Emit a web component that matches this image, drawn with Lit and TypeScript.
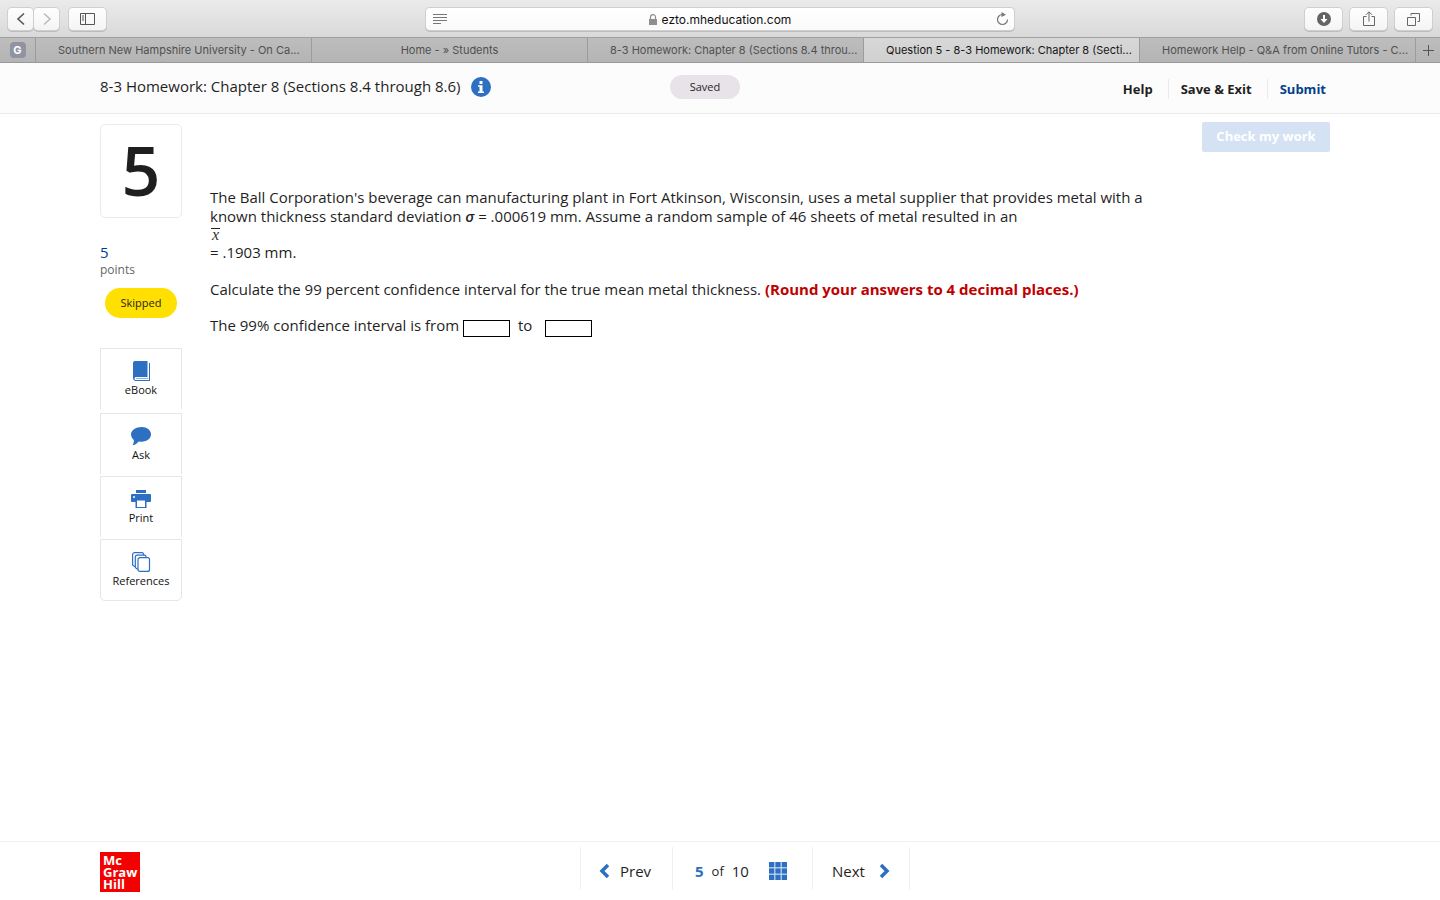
import { LitElement, html, css, svg } from "lit";
import { customElement, state } from "lit/decorators.js";
import { classMap } from "lit/directives/class-map.js";

@customElement("browser-chrome")
export class BrowserChrome extends LitElement {
  static styles = css`
    :host { display: block; font-family: Inter, "Liberation Sans", sans-serif; }
    .toolbar {
      display: grid;
      grid-template-columns: 1fr 41% 1fr;
      align-items: center;
      height: 37px;
      padding-top: 1px;
      box-sizing: border-box;
      background: linear-gradient(#ebebeb, #d9d9d9);
    }
    .group { display: flex; gap: 10px; padding-left: 8px; }
    .pair { display: flex; gap: 1px; }
    .group.end { justify-content: flex-end; gap: 8px; padding: 0 8px 0 0; }
    button { font: inherit; border: 0; padding: 0; margin: 0; }
    .key {
      display: flex;
      align-items: center;
      justify-content: center;
      width: 37px;
      height: 22px;
      border-radius: 4px;
      background: linear-gradient(#fefefe, #f4f4f4);
      box-shadow: 0 0 0 1px #cfcfcf, 0 1px 0 1px #bcbcbc;
    }
    .key.small { width: 25px; }
    .address {
      display: grid;
      grid-template-columns: 28px 1fr 24px;
      align-items: center;
      height: 22px;
      margin: 0 1px;
      border-radius: 4px;
      background: linear-gradient(#fff, #fafafa);
      box-shadow: 0 0 0 1px #cfcfcf, 0 1px 0 1px #bcbcbc;
    }
    .address button { display: flex; justify-content: center; background: none; }
    .host { display: flex; justify-content: center; align-items: center; gap: 5px; padding-right: 4px; font-size: 12px; color: #111; }
    .tabs {
      display: grid;
      grid-template-columns: 35px repeat(5, 1fr) 25px;
      height: 26px;
      box-sizing: border-box;
      border-top: 1px solid #a0a0a0;
      border-bottom: 1px solid #999;
      background: linear-gradient(#bdbdbd, #b4b4b4);
    }
    .tab {
      display: block;
      min-width: 0;
      padding: 0 12px;
      border-left: 1px solid #9b9b9b;
      background: none;
      color: #505050;
      font-size: 11px;
      line-height: 24px;
      text-align: center;
      white-space: nowrap;
    }
    .tab.long { padding: 0 6px 0 22px; text-align: left; }
    .tab.current { background: linear-gradient(#d8d8d8, #d0d0d0); color: #151515; }
    .pinned, .add { display: flex; align-items: center; justify-content: center; background: none; }
    .add { border-left: 1px solid #9b9b9b; }
    .badge {
      width: 16px;
      height: 16px;
      border-radius: 4px;
      background: #9293a2;
      color: #fff;
      font-size: 11px;
      font-weight: 700;
      line-height: 16px;
    }
    svg { display: block; }
  `;

  private tabs = [
    "Southern New Hampshire University - On Ca...",
    "Home - » Students",
    "8-3 Homework: Chapter 8 (Sections 8.4 throu...",
    "Question 5 - 8-3 Homework: Chapter 8 (Secti...",
    "Homework Help - Q&A from Online Tutors - C...",
  ];

  @state() private current = 3;

  render() {
    return html`
      <div class="toolbar">
        <div class="group">
          <div class="pair">
            <button class="key small" aria-label="Back">
              <svg width="10" height="14" fill="none" stroke="#555" stroke-width="1.6"><path d="M8 1.500 2 7l6 5.500" /></svg>
            </button>
            <button class="key small" aria-label="Forward">
              <svg width="10" height="14" fill="none" stroke="#bbb" stroke-width="1.6"><path d="m2 1.500 6 5.500-6 5.500" /></svg>
            </button>
          </div>
          <button class="key" aria-label="Sidebar">
            <svg width="15" height="12" fill="none" stroke="#555">
              <path d="M.5.5h14v11H.5zM5.500.5v11M2 3h2M2 5h2M2 7h2" />
            </svg>
          </button>
        </div>
        <div class="address">
          <button aria-label="Reader">
            <svg width="14" height="11" stroke="#777"><path d="M0 .5h14M0 3.500h14M0 6.500h14M0 9.500h8" /></svg>
          </button>
          <div class="host">
            <svg width="8" height="11"><path d="M0 5h8v6H0z" fill="#8e8e8e" /><path d="M1.500 5V3a2.500 2.300 0 0 1 5 0v2" fill="none" stroke="#8e8e8e" stroke-width="1.2" /></svg>
            <span>ezto.mheducation.com</span>
          </div>
          <button aria-label="Reload">
            <svg width="13" height="14"><path d="M6.500 2.500a5 5 0 1 0 5 5" fill="none" stroke="#777" stroke-width="1.200" /><path d="M5.500 0v5L10 2.700z" fill="#777" /></svg>
          </button>
        </div>
        <div class="group end">
          <button class="key" aria-label="Downloads">
            <svg width="14" height="14"><circle cx="7" cy="7" r="7" fill="#636363" /><path d="M6 3h2v4h2.500L7 11 3.500 7H6z" fill="#fff" /></svg>
          </button>
          <button class="key" aria-label="Share">
            <svg width="12" height="16" fill="none" stroke="#666"><path d="M3.500 5.500h-3v9h11v-9h-3M6 10.500V1M3 3.800 6 .8l3 3" /></svg>
          </button>
          <button class="key" aria-label="Show all tabs">
            <svg width="13" height="13" fill="none" stroke="#666"><path d="M.5 4.500h8v8h-8zM4 2.500v-2h8.500v8h-2" /></svg>
          </button>
        </div>
      </div>
      <div class="tabs">
        <button class="pinned" aria-label="Pinned tab"><span class="badge">G</span></button>
        ${this.tabs.map(
          (label, i) => html`<button
            class=${classMap({ tab: true, long: label.length > 30, current: i === this.current })}
            @click=${() => (this.current = i)}
          >${label}</button>`
        )}
        <button class="add" aria-label="New tab">
          <svg width="11" height="11" stroke="#555"><path d="M0 5.500h11M5.500 0v11" /></svg>
        </button>
      </div>
    `;
  }
}

const icons = {
  book: svg`<path d="M4 0h12.500v16H5a1.300 1.300 0 0 0 0 3H18V2h1v18H4.500A3 3 0 0 1 2 17V2a2 2 0 0 1 2-2z" fill="#2d6fc0"/><path d="M5 17.500h12.500" stroke="#8fb4e0" fill="none"/>`,
  ask: svg`<path d="M10.500 1C16 1 20 4.200 20 8.300s-4 7.400-9.500 7.400c-1 0-2-.1-2.900-.3C6 17.700 3.500 19 1.300 19.300c1-1.200 1.700-3 1.500-5.400C1 12.500 0 10.500 0 8.300 0 4.200 5 1 10.500 1z" fill="#2d6fc0"/>`,
  print: svg`<path d="M5 1h10v3H5z" fill="#2d6fc0"/><path d="M1 5h18a1 1 0 0 1 1 1v6a1 1 0 0 1-1 1h-3.500v6h-11v-6H1a1 1 0 0 1-1-1V6a1 1 0 0 1 1-1z" fill="#2d6fc0"/><path d="M6 11.500h8V18H6z" fill="#fff"/><circle cx="3" cy="8" r="1" fill="#fff"/>`,
  references: svg`<g fill="#fff" stroke="#2d6fc0" stroke-width="1.200"><path d="M3.500.6h7.300A1.500 1.500 0 0 1 12.500 2v12.500h-9L1.600 13V2.500A2 2 0 0 1 3.500.6z"/><path d="M6 3.100h7.300A1.500 1.500 0 0 1 15 4.600V17H6l-1.700-1.500V5A2 2 0 0 1 6 3.100z"/><path d="M8.500 5.600h8a2 2 0 0 1 2 2v9.800a2 2 0 0 1-2 2H9a2 2 0 0 1-2-2V7.100z"/></g>`,
};

@customElement("app-root")
export class AppRoot extends LitElement {
  static styles = css`
    :host {
      display: flex;
      flex-direction: column;
      min-height: 100vh;
      background: #fff;
      color: #1f1f1f;
      font-family: "Open Sans", "Liberation Sans", sans-serif;
      font-size: 15px;
    }
    button, input { font: inherit; color: inherit; margin: 0; }
    button { border: 0; padding: 0; background: none; }
    svg { display: block; }
    .header {
      display: grid;
      grid-template-columns: minmax(0, 570px) 1fr auto;
      align-items: start;
      height: 50px;
      padding: 0 99px 0 100px;
      background: #fcfcfc;
      border-bottom: 1px solid #ebebeb;
    }
    .title { display: flex; align-items: center; gap: 10px; padding-top: 14px; }
    h1 { margin: 0; padding-bottom: 2px; font-size: 15px; line-height: 18px; font-weight: 400; }
    .saved {
      justify-self: start;
      width: 70px;
      margin-top: 12px;
      border-radius: 12px;
      background: #e8e3e8;
      font-size: 11px;
      line-height: 24px;
      text-align: center;
    }
    .actions { display: flex; padding-top: 16px; font-size: 13px; font-weight: 700; line-height: 20px; }
    .actions button { padding: 0 15px 0 12px; border-left: 1px solid #ebebeb; }
    .actions button:first-child { border: 0; }
    .actions .submit { color: #03408b; }
    .main { display: flex; flex: 1; padding: 8px 110px 0 100px; }
    .side { display: flex; flex-direction: column; width: 82px; padding-top: 2px; margin-right: 28px; flex: none; }
    .number {
      padding-bottom: 3px;
      border: 1px solid #ebebeb;
      border-radius: 5px;
      font-size: 68px;
      font-weight: 600;
      line-height: 89px;
      text-align: center;
    }
    .score { margin-top: 26px; padding-bottom: 1px; color: #03408b; line-height: 17px; }
    .points { color: #666; font-size: 12px; line-height: 16px; }
    .skipped {
      align-self: center;
      width: 72px;
      margin: 10px 0 30px;
      border-radius: 15px;
      background: #ffe000;
      font-size: 11px;
      line-height: 30px;
      text-align: center;
    }
    .tool {
      display: flex;
      flex-direction: column;
      align-items: center;
      gap: 1px;
      height: 61px;
      box-sizing: border-box;
      padding-top: 12px;
      margin-bottom: 2px;
      border: 1px solid #e6e6e6;
      border-bottom: 0;
      font-size: 11px;
      line-height: 16px;
      color: #111;
    }
    .tool:first-child { margin-bottom: 4px; }
    .tool:last-child { height: 62px; border-bottom: 1px solid #e6e6e6; border-radius: 0 0 5px 5px; }
    .tools { display: flex; flex-direction: column; }
    .content { display: flex; flex-direction: column; flex: 1; min-width: 0; }
    .check {
      align-self: flex-end;
      width: 128px;
      height: 30px;
      padding-bottom: 2px;
      border-radius: 2px;
      background: #d5e2f3;
      color: #fff;
      font-size: 13px;
      font-weight: 700;
    }
    .question { max-width: 940px; margin-top: 36px; line-height: 18px; }
    p { margin: 0 0 18px; }
    .given { line-height: 19px; }
    .sigma { font-style: italic; font-weight: 600; }
    .mean { display: block; color: #333; font: italic 16px/17px "Liberation Serif", serif; }
    .mean span { display: inline-block; border-top: 1px solid #222; line-height: 12px; padding: 0 1px; margin-left: 1px; }
    .red { color: #c00000; font-weight: 700; }
    .answer { width: 47px; height: 17px; box-sizing: border-box; padding: 0 2px; border: 1px solid #000; border-radius: 0; vertical-align: -3px; background: #fff; }
    .to { padding: 0 9px 0 4px; }
    .footer {
      display: flex;
      align-items: flex-start;
      height: 58px;
      padding: 0 90px 0 100px;
      border-top: 1px solid #f0f0f0;
    }
    .logo {
      width: 37px;
      height: 38px;
      padding: 2px 0 0 3px;
      margin-top: 10px;
      background: #f50000;
      color: #fff;
      font-size: 13px;
      font-weight: 700;
      line-height: 12px;
    }
    .pager { display: flex; margin: 5px auto 0; height: 43px; font-size: 15px; border-right: 1px solid #f0f0f0; }
    .pager > * { display: flex; align-items: center; padding-top: 4px; border-left: 1px solid #f0f0f0; box-sizing: border-box; }
    .prev { width: 92px; gap: 10px; padding-left: 18px; }
    .next { width: 97px; gap: 14px; padding-left: 19px; }
    .place { width: 140px; gap: 8px; padding-left: 22px; }
    .place strong { color: #2d6fc0; }
    .of { font-size: 13px; }
    .place button { margin-left: 12px; }
  `;

  @state() private low = "";
  @state() private high = "";

  private tools = [
    { label: "eBook", icon: icons.book },
    { label: "Ask", icon: icons.ask },
    { label: "Print", icon: icons.print },
    { label: "References", icon: icons.references },
  ];

  render() {
    return html`
      <browser-chrome></browser-chrome>
      <header class="header">
        <div class="title">
          <h1>8-3 Homework: Chapter 8 (Sections 8.4 through 8.6)</h1>
          <button aria-label="Assignment information">
            <svg width="20" height="20"><circle cx="10" cy="10" r="10" fill="#2d6fc0" /><path d="M8.500 4h3v3h-3zM7 8.200h4.500v6.300H13V16H7v-1.500h1.500V9.700H7z" fill="#fff" /></svg>
          </button>
        </div>
        <div class="saved">Saved</div>
        <nav class="actions">
          <button>Help</button>
          <button>Save &amp; Exit</button>
          <button class="submit">Submit</button>
        </nav>
      </header>
      <main class="main">
        <aside class="side">
          <div class="number">5</div>
          <div class="score">5</div>
          <div class="points">points</div>
          <div class="skipped">Skipped</div>
          <div class="tools">
            ${this.tools.map(
              (t) => html`<button class="tool"><svg width="20" height="20">${t.icon}</svg>${t.label}</button>`
            )}
          </div>
        </aside>
        <section class="content">
          <button class="check">Check my work</button>
          <div class="question">
            <p class="given">
              The Ball Corporation's beverage can manufacturing plant in Fort Atkinson, Wisconsin, uses a metal supplier that provides metal with a
              known thickness standard deviation <span class="sigma">σ</span> = .000619 mm. Assume a random sample of 46 sheets of metal resulted in an
              <span class="mean"><span>x</span></span>
              = .1903 mm.
            </p>
            <p>
              Calculate the 99 percent confidence interval for the true mean metal thickness.
              <span class="red">(Round your answers to 4 decimal places.)</span>
            </p>
            <p>
              <label for="low">The 99% confidence interval is from</label>
              <input id="low" class="answer" .value=${this.low} @input=${(e: Event) => (this.low = (e.target as HTMLInputElement).value)} />
              <label for="high" class="to">to</label>
              <input id="high" class="answer" .value=${this.high} @input=${(e: Event) => (this.high = (e.target as HTMLInputElement).value)} />
            </p>
          </div>
        </section>
      </main>
      <footer class="footer">
        <div class="logo">Mc<br />Graw<br />Hill</div>
        <nav class="pager">
          <button class="prev">
            <svg width="11" height="16" fill="none" stroke="#2d6fc0" stroke-width="3.500"><path d="M9 2 3 8l6 6" /></svg>
            Prev
          </button>
          <div class="place">
            <strong>5</strong><span class="of">of</span><span>10</span>
            <button aria-label="Question grid">
              <svg width="18" height="18" fill="#2d6fc0">
                <path d="M0 0h18v18H0z" fill="#c9dcf2" />
                ${[0, 6.4, 12.8].map((y) => [0, 6.4, 12.8].map((x) => svg`<rect x=${x} y=${y} width="5.2" height="5.2" />`))}
              </svg>
            </button>
          </div>
          <button class="next">
            Next
            <svg width="11" height="16" fill="none" stroke="#2d6fc0" stroke-width="3.500"><path d="m2 2 6 6-6 6" /></svg>
          </button>
        </nav>
      </footer>
    `;
  }
}
